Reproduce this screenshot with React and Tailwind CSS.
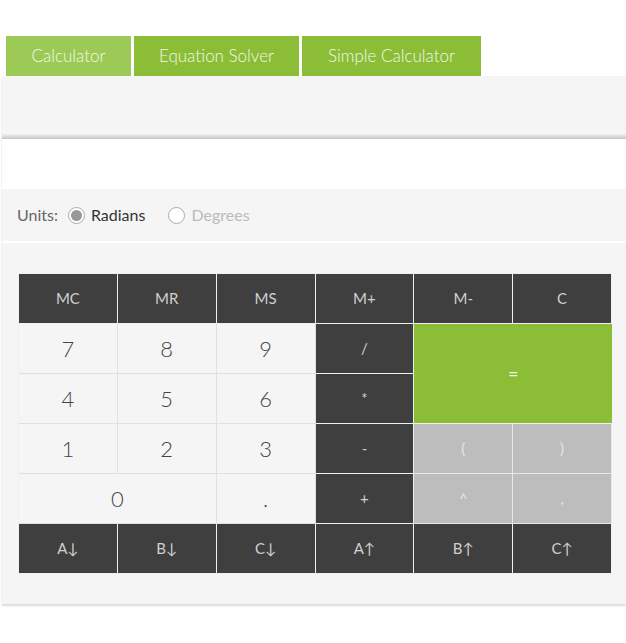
import React from 'react';

const dark = 'bg-[#3f3f3f] text-[#d0d0d0] text-[15px] border-r border-b border-[#f0f0f0]';
const light = 'bg-[#f5f5f5] text-[#444] text-[22px] font-light border-r border-b border-[#e0e0e0]';
const grey = 'bg-[#bdbdbd] text-[#e6e6e6] text-[15px] border-r border-b border-[#e8e8e8]';

const keys = [
  { label: 'MC', cls: dark },
  { label: 'MR', cls: dark },
  { label: 'MS', cls: dark },
  { label: 'M+', cls: dark },
  { label: 'M-', cls: dark },
  { label: 'C', cls: dark },
  { label: '7', cls: light },
  { label: '8', cls: light },
  { label: '9', cls: light },
  { label: '/', cls: dark },
  { label: '=', cls: 'bg-[#8bbd37] text-[#eef6e0] text-[18px] border-b border-[#f0f0f0] col-span-2 row-span-2' },
  { label: '4', cls: light },
  { label: '5', cls: light },
  { label: '6', cls: light },
  { label: '*', cls: dark },
  { label: '1', cls: light },
  { label: '2', cls: light },
  { label: '3', cls: light },
  { label: '-', cls: dark },
  { label: '(', cls: grey },
  { label: ')', cls: grey },
  { label: '0', cls: light + ' col-span-2' },
  { label: '.', cls: light },
  { label: '+', cls: dark },
  { label: '^', cls: grey },
  { label: ',', cls: grey },
  { label: 'A↓', cls: dark },
  { label: 'B↓', cls: dark },
  { label: 'C↓', cls: dark },
  { label: 'A↑', cls: dark },
  { label: 'B↑', cls: dark },
  { label: 'C↑', cls: dark },
];

const Radio = ({ checked }) => (
  <span className="w-[17px] h-[17px] rounded-full border border-[#aaa] bg-white flex items-center justify-center">
    {checked && <span className="w-[11px] h-[11px] rounded-full bg-[#999]" />}
  </span>
);

export default function App() {
  return (
    <div className="min-h-[643px] bg-white pt-[36px]" style={{ fontFamily: 'Lato, "Open Sans", sans-serif' }}>
      <div className="flex gap-[3px] pl-[6px]">
        <div className="w-[125px] h-[40px] bg-[#9dc957] text-[#f3f9e8] text-[17px] font-light flex items-center justify-center">Calculator</div>
        <div className="w-[165px] h-[40px] bg-[#8bbd37] text-[#f3f9e8] text-[17px] font-light flex items-center justify-center">Equation Solver</div>
        <div className="w-[179px] h-[40px] bg-[#8bbd37] text-[#f3f9e8] text-[17px] font-light flex items-center justify-center">Simple Calculator</div>
      </div>
      <div className="ml-[2px] bg-[#f5f5f5] shadow-[0_2px_2px_rgba(0,0,0,0.15)]">
        <div className="h-[58px]" />
        <div className="h-[5px] bg-gradient-to-b from-[#f0f0f0] to-[#c6c6c6]" />
        <div className="h-[50px] bg-white" />
        <div className="h-[54px] flex items-center pl-[15px] text-[16px] border-b-2 border-white">
          <span className="text-[#666] mr-[10px]">Units:</span>
          <Radio checked />
          <span className="text-[#333] ml-[6px] mr-[23px]">Radians</span>
          <Radio />
          <span className="text-[#bbb] ml-[6px]">Degrees</span>
        </div>
        <div className="pt-[30px] pb-[30px] pl-[16px] pr-[14px]">
          <div className="grid grid-cols-6 grid-rows-[repeat(6,50px)] w-[594px] border-l border-t border-[#f0f0f0]">
            {keys.map((k) => (
              <div key={k.label} className={`${k.cls} flex items-center justify-center`}>
                {k.label}
              </div>
            ))}
          </div>
        </div>
      </div>
    </div>
  );
}
